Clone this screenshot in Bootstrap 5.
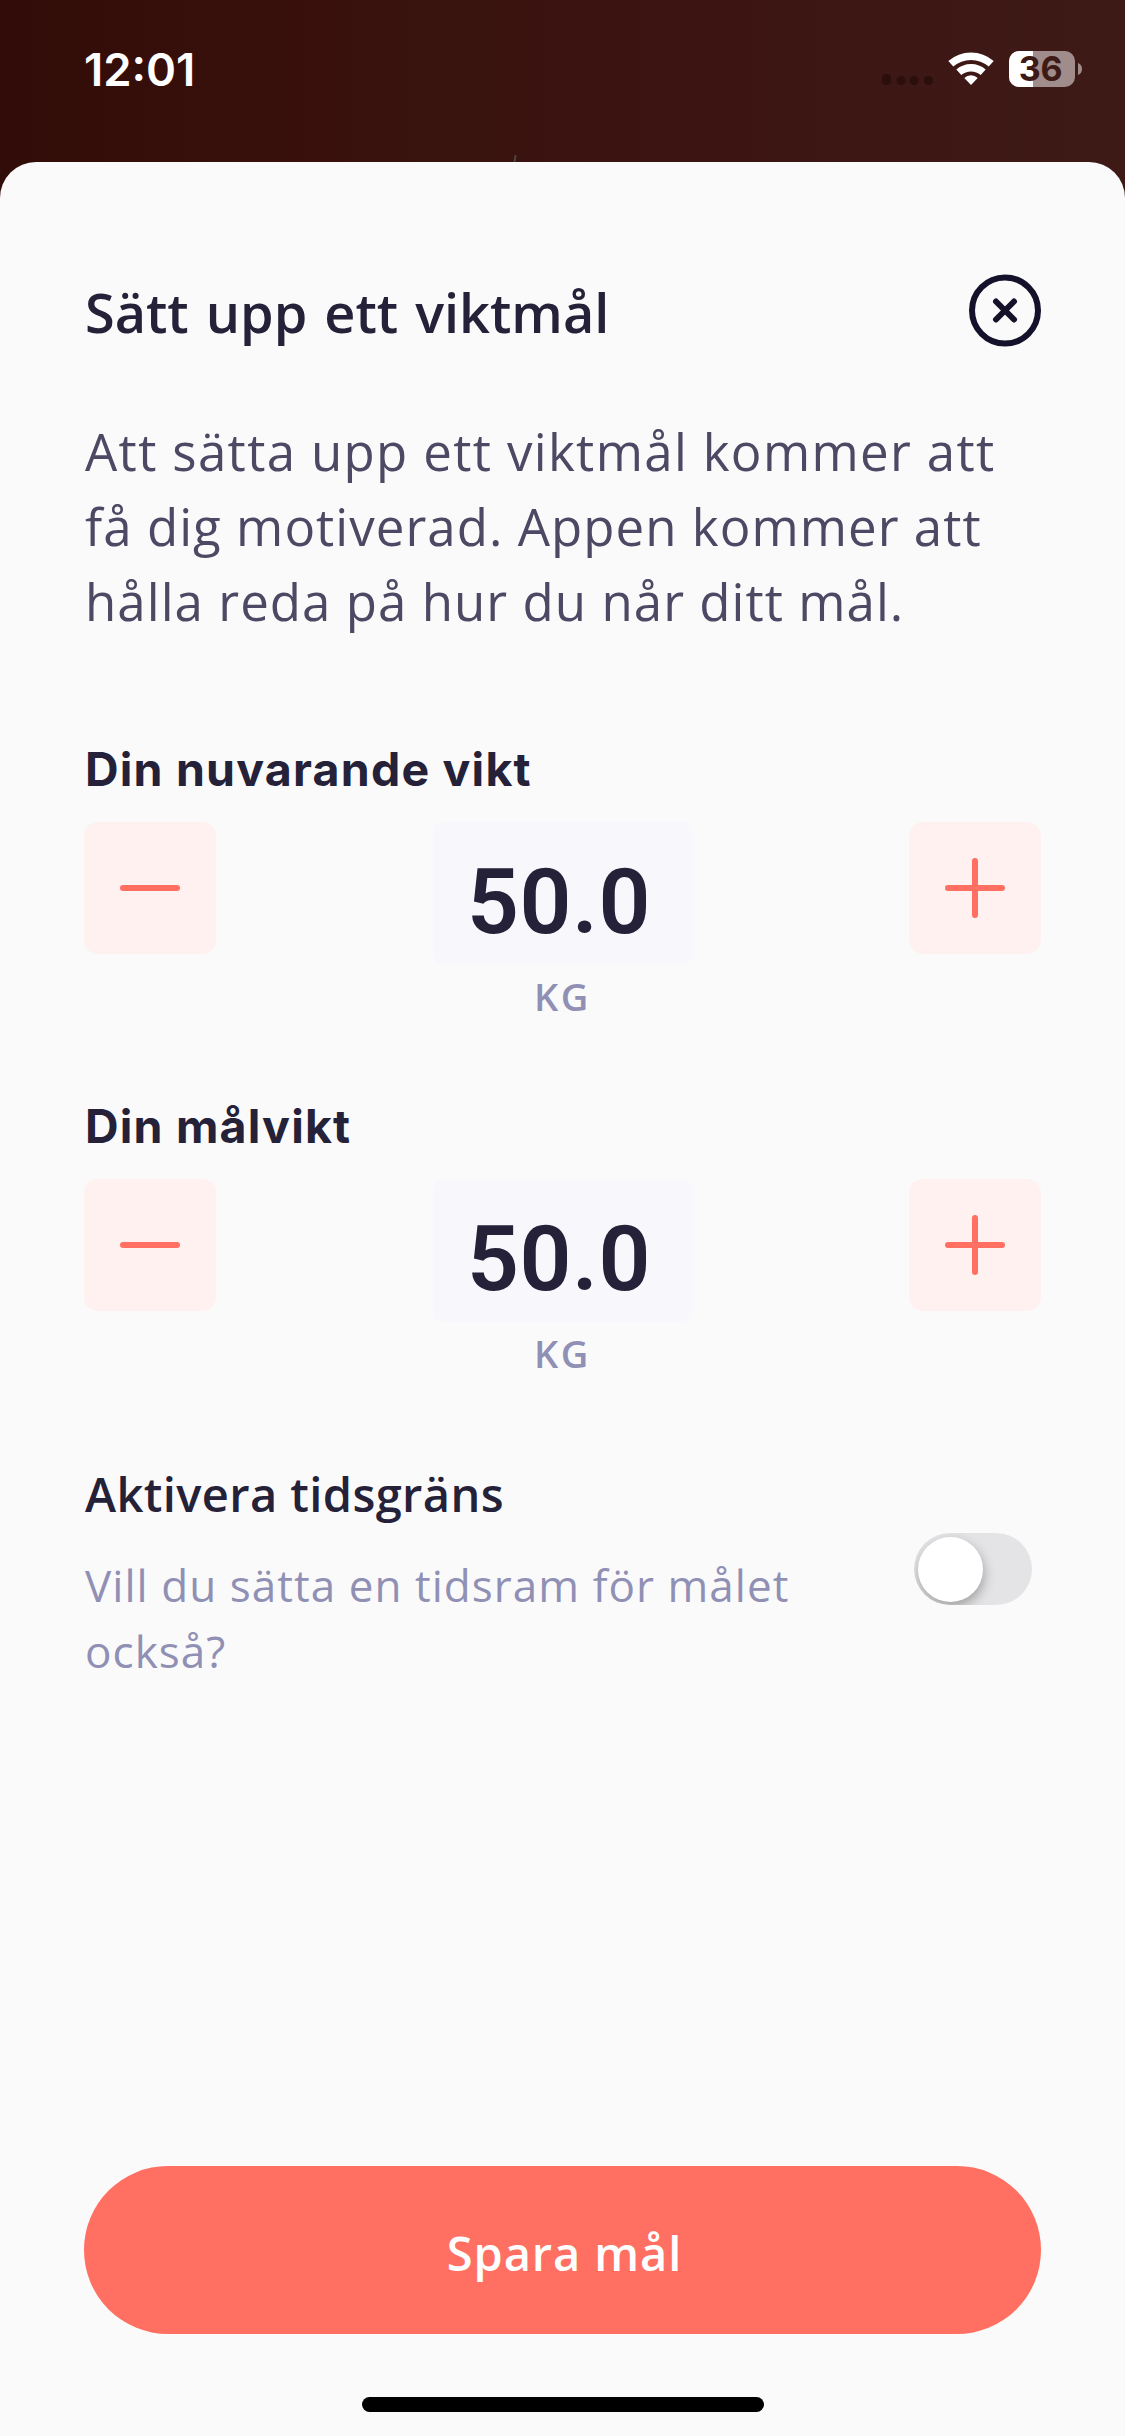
<!DOCTYPE html>
<html lang="sv">
<head>
  <meta charset="UTF-8">
  <meta name="viewport" content="width=device-width, initial-scale=1.0">
  <title>Sätt upp ett viktmål</title>
  <!-- Bootstrap CSS -->
  <link href="https://cdn.jsdelivr.net/npm/bootstrap@5.3.0/dist/css/bootstrap.min.css" rel="stylesheet">
  <style>
    body { font-family: "Open Sans", "Lato", sans-serif; color: #252138; }
    .screen { width: 1125px; height: 2436px; background: linear-gradient(90deg, #320c08, #39100c 28%, #39130e 38%, #3b1311 52%, #3e1a17); }

    .status-bar { height: 162px; padding: 42px 43px 0 84px; font-family: "Inter", sans-serif; }
    .clock { font-size: 45.5px; font-weight: 600; line-height: 54px; padding-top: 1px; }
    .backdrop-line { width: 2px; height: 7px; left: 514px; bottom: 0; background: #4a4541; transform: skewX(-8deg); }

    .sheet { background: #fafafa; border-radius: 36px 36px 0 0; padding: 112px 84px 24px; }
    .title, .intro, .label-text, .limit-title, .hint { padding-left: 1px; }
    .title { font-size: 54px; font-weight: 600; line-height: 76px; word-spacing: 3px; }
    .intro { font-size: 51px; line-height: 75px; color: #4d4863; letter-spacing: 1.05px; margin-top: 64px; }
    .intro span { letter-spacing: 1.35px; }

    .weight { margin-bottom: 76px; }
    .intro + .weight { margin-top: 100px; }
    .label-text { font-family: "Inter", sans-serif; font-size: 46.5px; font-weight: 700; line-height: 60px; letter-spacing: 1.2px; margin-bottom: 23px; }
    .step { width: 132px; height: 132px; border-radius: 14px; background: #fff1f0; }
    .value-box { width: 259px; height: 143px; border-radius: 10px; background: #f8f7fc; padding-right: 7px; font-family: "Roboto", sans-serif; font-size: 91px; font-weight: 600; line-height: 160px; letter-spacing: .5px; }
    .unit { font-size: 38px; font-weight: 600; line-height: 48px; color: #9090b5; letter-spacing: 2.5px; margin-top: 7px; }

    .limit { margin-top: 11px; }
    .limit-title { font-size: 47px; font-weight: 600; line-height: 60px; letter-spacing: .4px; margin-bottom: 28px; }
    .hint { font-size: 44px; line-height: 66px; color: #9090b5; letter-spacing: 1.05px; }
    .toggle { width: 118px; height: 72px; background: #e4e4e6; border-radius: 36px; padding: 3.5px; margin: 69px 9px 0 0; }
    .knob { width: 65px; height: 65px; background: #fff; box-shadow: 1px 5px 12px rgba(0, 0, 0, .3); }

    .save { height: 168px; border-radius: 84px; background: #ff7062; color: #fff; font-size: 47px; font-weight: 600; letter-spacing: .9px; padding: 12px 10px 6px 14px; }
    .home-bar { width: 402px; height: 15px; background: #000; margin-top: 63px; }
  </style>
</head>
<body>
  <div class="screen d-flex flex-column overflow-hidden">
    <!-- Statusrad -->
    <div class="status-bar position-relative d-flex justify-content-between align-items-start text-white">
      <span class="clock">12:01</span>
      <svg width="202" height="54" viewBox="880 42 202 54">
        <g fill="#2b0f0c">
          <rect x="882" y="74" width="9" height="11" rx="4"/>
          <circle cx="901" cy="80.500" r="4.500"/>
          <circle cx="914" cy="80.500" r="4.500"/>
          <circle cx="928.500" cy="80.500" r="4.500"/>
        </g>
        <g fill="none" stroke="#fff" stroke-width="7.500">
          <path d="M950.800 63.800a30.500 30.500 0 0 1 40.400 0"/>
          <path d="M958.800 72.300a18.500 18.500 0 0 1 24.400 0"/>
        </g>
        <path d="M971 85l-6.700-7a9.700 9.700 0 0 1 13.400 0z" fill="#fff"/>
        <rect x="1009" y="51" width="66" height="36" rx="10" fill="#a08c8a"/>
        <path d="M1033 51h-14a10 10 0 0 0-10 10v16a10 10 0 0 0 10 10h14z" fill="#fff"/>
        <path d="M1078 63a6.500 6.500 0 0 1 0 12z" fill="#a08c8a"/>
        <text x="1040.700" y="81" text-anchor="middle" font-size="34" font-weight="700" fill="#3e1a17">36</text>
      </svg>
      <span class="backdrop-line position-absolute"></span>
    </div>

    <!-- Panel -->
    <div class="sheet d-flex flex-column flex-grow-1">
      <div class="d-flex justify-content-between align-items-start">
        <h1 class="title mb-0">Sätt upp ett viktmål</h1>
        <svg width="72" height="73" viewBox="0 0 72 73" fill="none" stroke="#14112a" stroke-width="6">
          <circle cx="36" cy="36.500" r="33"/>
          <path d="M27 27.500l18 18m0-18l-18 18" stroke-linecap="round"/>
        </svg>
      </div>
      <p class="intro mb-0 text-nowrap"><span>Att sätta upp ett viktmål kommer att</span><br>få dig motiverad. Appen kommer att<br>hålla reda på hur du når ditt mål.</p>

      <!-- Nuvarande vikt -->
      <div class="weight">
        <div class="label-text">Din nuvarande vikt</div>
        <div class="d-flex justify-content-between align-items-start">
          <button type="button" class="step btn border-0 p-0 d-flex align-items-center justify-content-center" aria-label="Minska">
            <svg width="60" height="60" stroke="#ff7062" stroke-width="6" stroke-linecap="round"><path d="M3 30h54"/></svg>
          </button>
          <div class="text-center">
            <div class="value-box">50.0</div>
            <div class="unit">KG</div>
          </div>
          <button type="button" class="step btn border-0 p-0 d-flex align-items-center justify-content-center" aria-label="Öka">
            <svg width="60" height="60" stroke="#ff7062" stroke-width="6" stroke-linecap="round"><path d="M3 30h54M30 3v54"/></svg>
          </button>
        </div>
      </div>

      <!-- Målvikt -->
      <div class="weight">
        <div class="label-text">Din målvikt</div>
        <div class="d-flex justify-content-between align-items-start">
          <button type="button" class="step btn border-0 p-0 d-flex align-items-center justify-content-center" aria-label="Minska">
            <svg width="60" height="60" stroke="#ff7062" stroke-width="6" stroke-linecap="round"><path d="M3 30h54"/></svg>
          </button>
          <div class="text-center">
            <div class="value-box">50.0</div>
            <div class="unit">KG</div>
          </div>
          <button type="button" class="step btn border-0 p-0 d-flex align-items-center justify-content-center" aria-label="Öka">
            <svg width="60" height="60" stroke="#ff7062" stroke-width="6" stroke-linecap="round"><path d="M3 30h54M30 3v54"/></svg>
          </button>
        </div>
      </div>

      <!-- Tidsgräns -->
      <div class="limit d-flex justify-content-between align-items-start">
        <div>
          <div class="limit-title">Aktivera tidsgräns</div>
          <div class="hint text-nowrap">Vill du sätta en tidsram för målet<br>också?</div>
        </div>
        <div class="toggle overflow-hidden" role="switch" aria-checked="false">
          <div class="knob rounded-circle"></div>
        </div>
      </div>

      <button type="button" class="save btn w-100 border-0 mt-auto">Spara mål</button>
      <div class="home-bar rounded-pill align-self-center"></div>
    </div>
  </div>

  <!-- Bootstrap JS Bundle with Popper -->
  <script src="https://cdn.jsdelivr.net/npm/bootstrap@5.3.0/dist/js/bootstrap.bundle.min.js"></script>
</body>
</html>
